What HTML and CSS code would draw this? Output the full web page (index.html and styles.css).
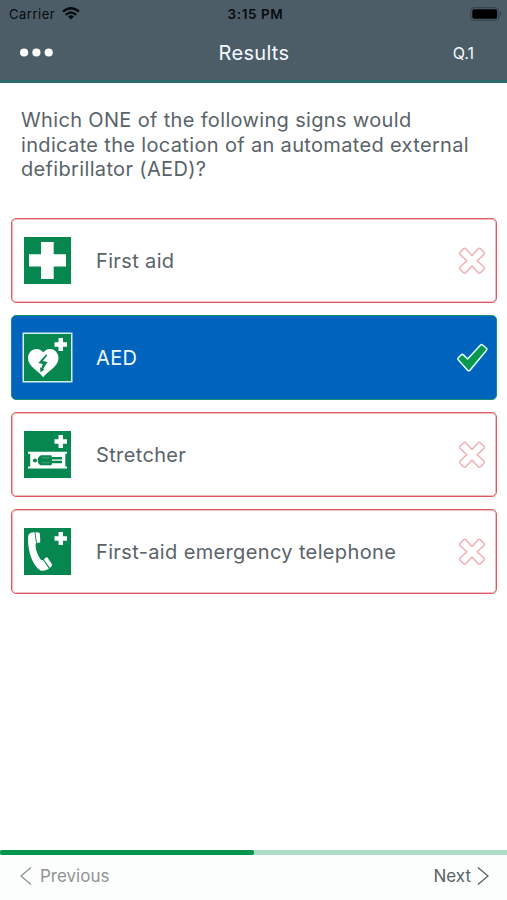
FILE: index.html
```html
<!DOCTYPE html>
<html lang="en">
<head>
<meta charset="utf-8">
<title>Results</title>
<link rel="stylesheet" href="styles.css">
</head>
<body>
<div class="app">
  <header class="header">
    <div class="status">
      <div class="carrier"><span>Carrier</span>
        <svg class="wifi" width="18" height="13" viewBox="0 0 18 13"><g fill="none" stroke="#070b0e" stroke-width="2.3"><path d="M1 4.7Q9-2.2 17 4.700"/><path d="M3.800 7.800Q9 3.300 14.200 7.800"/></g><path d="M6 9.500Q9 7 12 9.500L9 12.500Z" fill="#070b0e"/></svg>
      </div>
      <div class="clock">3:15 PM</div>
      <svg class="battery" width="32" height="14" viewBox="0 0 32 14"><rect x=".7" y=".7" width="28" height="12.6" rx="3.3" fill="none" stroke="#34414a"/><rect x="2.3" y="2.3" width="24.8" height="9.4" rx="1.8" fill="#000"/><path d="M30 5v4q1.500-.5 1.500-2T30 5" fill="#34414a"/></svg>
    </div>
    <div class="navbar">
      <svg class="dots" width="33" height="9" viewBox="0 0 33 9" fill="#fff"><circle cx="4.1" cy="4.500" r="4.100"/><circle cx="16.400" cy="4.500" r="4.100"/><circle cx="28.700" cy="4.500" r="4.100"/></svg>
      <h1 class="title">Results</h1>
      <div class="number">Q.1</div>
    </div>
  </header>
  <main class="content">
    <p class="question">Which ONE of the following signs would<br>indicate the location of an automated external<br>defibrillator (AED)?</p>
    <ul class="answers">
      <li class="answer">
        <svg class="sign" viewBox="0 0 47 47"><path fill="#06874f" d="M0 0h47v47H0z"/><path fill="#fff" d="M17 5h12.700v12.200H42v12.400H29.700V42H17V29.600H5V17.200h12z"/></svg>
        <span class="label">First aid</span>
        <svg class="mark" viewBox="0 0 32 32"><use href="#cross"/></svg>
      </li>
      <li class="answer chosen">
        <svg class="sign framed" viewBox="0 0 47 47"><path fill="#06874f" d="M0 0h47v47H0z"/><use href="#plus"/><path fill="#fff" d="M19.200 43.300C15.500 37.500 4 33 4 24C4 14.500 15.500 12 19.200 18.500C23 12 34.500 14.500 34.500 24C34.500 33 23 37.500 19.200 43.300Z"/><path fill="#06874f" d="M22 20.500L14.300 29l4.500 1-1.500 4-1.300-.5.600 5 4-3.200-1.500-.4 4.400-7-4.800-1 4.600-5.500z"/></svg>
        <span class="label">AED</span>
        <svg class="mark" viewBox="0 0 32 32"><path d="M2.400 18Q1.200 16.800 2.300 15.700L5.200 12.900Q6.300 11.900 7.400 12.900L11.600 17L24.400 3.200Q25.400 2.100 26.600 3L30.400 6.200Q31.500 7.100 30.500 8.200L14 28.200Q12.900 29.500 11.600 28.200Z" fill="#0a974f" stroke="#e1fff5" stroke-width="1.500"/></svg>
      </li>
      <li class="answer">
        <svg class="sign" viewBox="0 0 47 47"><path fill="#06874f" d="M0 0h47v47H0z"/><use href="#plus"/><path fill="#fff" d="M4 20.800h39v2h-1.700v12.800H43v2H4v-2h2.200V22.800H4z"/><g fill="#06874f"><circle cx="11" cy="29.400" r="2"/><path d="M17 24.200h10.500v1.700H38v2.500H28v1.400h10v2.500H28l-.5 1.900H16.700q-3-1-3-4.700t3.300-5.300z"/></g><path d="M17.500 26.800h8M17.500 31.700h8" stroke="#75b99c" stroke-width=".6"/></svg>
        <span class="label">Stretcher</span>
        <svg class="mark" viewBox="0 0 32 32"><use href="#cross"/></svg>
      </li>
      <li class="answer">
        <svg class="sign" viewBox="0 0 47 47"><path fill="#06874f" d="M0 0h47v47H0z"/><use href="#plus"/><path fill="#fff" d="M5.200 5.800Q7 4 10.500 4.300L12 15l-.4 2.200Q11.500 24 17 32l2.200.2 5.800 8.500Q20.500 43.500 16.500 42.600C9 38 3.700 24.500 4 10Q4 7 5.200 5.800zM11.400 4.200l3.200.2q1.200.2 1.200 1.400l.5 7.500q0 1.300-1.200 1.400l-2.200.3zM19.900 31.600l1.900-2.100q.8-.7 1.700 0l4.400 6.700q.6 1.200-.4 2.100L26 40z"/></svg>
        <span class="label">First-aid emergency telephone</span>
        <svg class="mark" viewBox="0 0 32 32"><use href="#cross"/></svg>
      </li>
    </ul>
  </main>
  <footer class="footer">
    <div class="progress"><div class="bar"></div></div>
    <nav class="pager">
      <div class="step previous"><svg width="12" height="20" viewBox="0 0 12 20"><path d="M11 1.500L1 10l10 8.500"/></svg><span>Previous</span></div>
      <div class="step next"><span>Next</span><svg width="12" height="20" viewBox="0 0 12 20"><path d="M1 1.500L11 10 1 18.500"/></svg></div>
    </nav>
  </footer>
</div>
<svg class="defs" width="0" height="0"><defs>
  <path id="plus" fill="#fff" d="M34.500 4h4.500v4.300h4v4.400h-4V17h-4.500v-4.300h-4V8.300h4z"/>
  <path id="cross" fill="none" stroke="#eeacb3" stroke-width="1.400" stroke-linejoin="round" d="M16 10.400L22.200 3.700Q23.300 2.600 24.400 3.700L27.900 7.200Q29 8.300 27.900 9.400L21.200 15.700L27.900 22Q29 23.100 27.900 24.200L24.400 27.700Q23.300 28.800 22.200 27.700L16 21L9.800 27.700Q8.700 28.800 7.600 27.700L4.100 24.200Q3 23.100 4.100 22L10.800 15.700L4.100 9.400Q3 8.300 4.100 7.200L7.600 3.700Q8.700 2.600 9.800 3.700Z"/>
</defs></svg>
</body>
</html>
```
FILE: styles.css
```css
* { box-sizing: border-box; }
body { margin: 0; background: #fff; font-family: Inter, "Liberation Sans", sans-serif; color: #59636a; }
.app { display: flex; flex-direction: column; width: 507px; height: 900px; }
.header { height: 83px; background: #4d5d67; border-bottom: 3px solid #2b6b69; }
.status { display: grid; grid-template-columns: 1fr auto 1fr; align-items: center; height: 27px; padding: 0 5px 0 9px; color: #070b0e; font-size: 13px; }
.carrier { display: flex; align-items: center; gap: 7px; letter-spacing: .5px; }
.clock { font-size: 13.5px; font-weight: 600; letter-spacing: .6px; }
.battery { justify-self: end; }
.navbar { display: grid; grid-template-columns: 1fr auto 1fr; align-items: center; height: 51px; padding: 0 33px 0 20px; color: #f4faff; }
.title { margin: 0 -7px 0 7px; font-size: 20px; font-weight: 400; letter-spacing: .3px; padding-top: 1px; }
.number { justify-self: end; font-size: 16px; }
.content { flex: 1; padding: 25px 10px 0 11px; }
.question { margin: 0 0 36px 10px; font-size: 20px; line-height: 24.7px; letter-spacing: .34px; white-space: nowrap; }
.answers { display: flex; flex-direction: column; gap: 12px; margin: 0; padding: 0; list-style: none; }
.answer { display: flex; align-items: center; height: 85px; padding: 0 8px 0 12px; border: 1px solid #df5b61; border-radius: 5px; box-shadow: inset 0 0 0 1px #df5b6166; }
.chosen { background: #0064bd; border-color: #169272; box-shadow: none; color: #effaff; }
.sign { width: 47px; height: 47px; flex: none; }
.framed { box-shadow: 0 0 0 1.500px #d3efe9; }
.label { flex: 1; margin-left: 25px; padding-top: 1px; font-size: 20px; letter-spacing: .36px; }
.mark { width: 32px; height: 32px; flex: none; }
.footer { height: 50px; background: #fcfdfd; }
.progress { height: 5px; background: #addcc7; }
.bar { width: 254px; height: 5px; background: #04954f; border-radius: 2px; }
.pager { display: flex; justify-content: space-between; align-items: center; height: 41px; padding: 0 18px 0 20px; font-size: 17px; }
.step { display: flex; align-items: center; gap: 8px; }
.step svg { fill: none; stroke: currentColor; stroke-width: 1.400; }
.previous { color: #909396; }
.next { gap: 6px; }
.defs { position: absolute; }
```
